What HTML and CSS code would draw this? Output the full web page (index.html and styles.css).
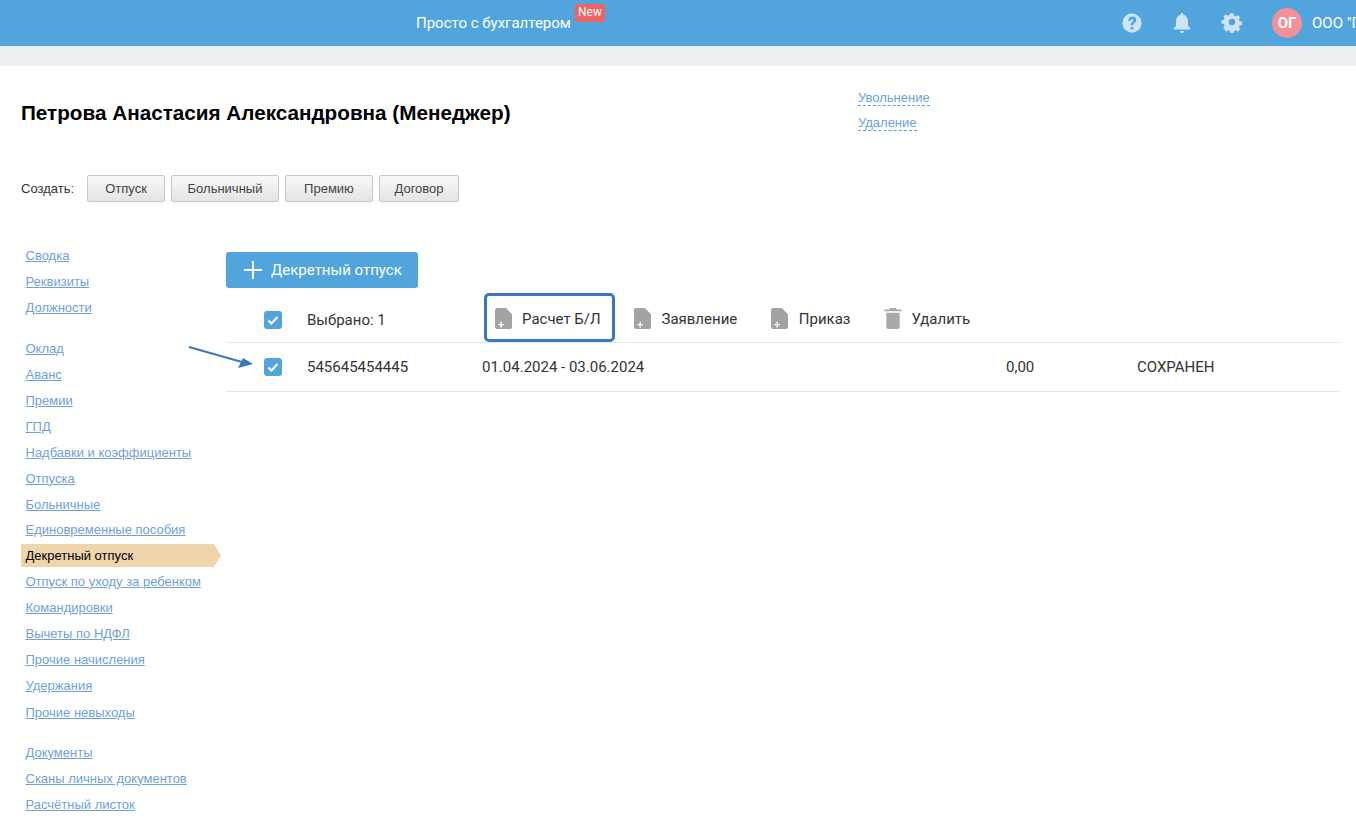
FILE: index.html
```
<!DOCTYPE html>
<html lang="ru">
<head>
<meta charset="utf-8">
<title>Декретный отпуск</title>
<link rel="stylesheet" href="styles.css">
</head>
<body>
<header class="topbar">
  <div class="promo">Просто с бухгалтером<span class="badge">New</span></div>
  <div class="top-icons">
    <svg class="top-icon" viewBox="0 0 24 24"><path fill-rule="evenodd" d="M12 1.500a10.500 10.500 0 1 0 0 21 10.500 10.500 0 0 0 0-21zM10.600 19v-2.700h2.800V19zm5.700-8.600c-.3.700-.9 1.200-1.500 1.700-.7.500-1.300 1-1.300 1.700v.6h-2.800v-.9c0-1.300.7-2 1.500-2.600.7-.5 1.400-.9 1.400-1.600 0-.8-.7-1.300-1.600-1.300-1 0-1.700.6-1.800 1.700H7.900C8 6.600 9.700 5 12.400 5c2.900 0 4.500 1.500 4.300 3.700 0 .6-.2 1.200-.4 1.700z"/></svg>
    <svg class="top-icon" viewBox="0 0 24 24"><path d="M12 1c1 0 1.500.6 1.500 1.500v.6c3.300.8 5 3.600 5 7v3.400c0 1.600 1.200 2.800 2.500 4v1.500H3V18c1.300-1.200 2.500-2.400 2.500-4v-3.900c0-3.400 1.700-6.200 5-7v-.6C10.500 1.600 11 1 12 1zM9.800 20.700h4.400c0 1.300-1 2.300-2.200 2.300s-2.200-1-2.200-2.300z"/></svg>
    <svg class="top-icon gear" viewBox="0 0 24 24"><path fill-rule="evenodd" d="M10 1.500h4l.6 3 2 .9 2.600-1.700 2.800 2.800-1.700 2.600.9 2 3 .6v4l-3 .6-.9 2 1.700 2.600-2.800 2.800-2.600-1.700-2 .9-.6 3h-4l-.6-3-2-.9-2.600 1.700L1.400 19l1.700-2.600-.9-2-3-.6v-4l3-.6.9-2L1.400 5.500l2.800-2.800 2.600 1.700 2-.9zM12 8a4 4 0 1 0 0 8 4 4 0 0 0 0-8z" transform="translate(1.200 1.200) scale(.9)"/></svg>
  </div>
  <div class="avatar">ОГ</div>
  <div class="company">ООО "Горизонт"</div>
</header>
<div class="subbar"></div>

<section class="person">
  <h1 class="person-name">Петрова Анастасия Александровна (Менеджер)</h1>
  <div class="person-links">
    <a class="dash-link">Увольнение</a>
    <a class="dash-link">Удаление</a>
  </div>
</section>

<div class="create-row">
  <span class="create-label">Создать:</span>
  <button class="create-btn btn-a">Отпуск</button>
  <button class="create-btn btn-b">Больничный</button>
  <button class="create-btn btn-c">Премию</button>
  <button class="create-btn btn-d">Договор</button>
</div>

<div class="main">
  <nav class="side">
    <ul class="side-group">
      <li><a>Сводка</a></li>
      <li><a>Реквизиты</a></li>
      <li><a>Должности</a></li>
    </ul>
    <ul class="side-group">
      <li><a>Оклад</a></li>
      <li><a>Аванс</a></li>
      <li><a>Премии</a></li>
      <li><a>ГПД</a></li>
      <li><a>Надбавки и коэффициенты</a></li>
      <li><a>Отпуска</a></li>
      <li><a>Больничные</a></li>
      <li class="side-tight"><a>Единовременные пособия</a></li>
      <li class="active"><span>Декретный отпуск</span></li>
      <li><a>Отпуск по уходу за ребенком</a></li>
      <li><a>Командировки</a></li>
      <li><a>Вычеты по НДФЛ</a></li>
      <li><a>Прочие начисления</a></li>
      <li><a>Удержания</a></li>
      <li class="side-last"><a>Прочие невыходы</a></li>
    </ul>
    <ul class="side-group">
      <li><a>Документы</a></li>
      <li><a>Сканы личных документов</a></li>
      <li><a>Расчётный листок</a></li>
    </ul>
  </nav>

  <section class="content">
    <button class="add-btn">
      <svg class="plus" viewBox="0 0 18 18"><path d="M9 0v18M0 9h18"/></svg>
      Декретный отпуск
    </button>

    <div class="table">
      <div class="toolbar">
        <span class="check"><svg viewBox="0 0 18 18"><path d="M4.500 9.500l3 3 6-6.500"/></svg></span>
        <span class="selected">Выбрано: 1</span>
        <div class="actions">
          <a class="action focus">
            <svg class="doc" viewBox="0 0 18 22"><path d="M2 0h9.500L18 6.500V20a2 2 0 0 1-2 2H2a2 2 0 0 1-2-2V2a2 2 0 0 1 2-2z"/><path class="doc-plus" d="M6.500 14.500v6M3.500 17.500h6"/></svg>
            Расчет Б/Л
          </a>
          <a class="action act-b">
            <svg class="doc" viewBox="0 0 18 22"><path d="M2 0h9.500L18 6.500V20a2 2 0 0 1-2 2H2a2 2 0 0 1-2-2V2a2 2 0 0 1 2-2z"/><path class="doc-plus" d="M6.500 14.500v6M3.500 17.500h6"/></svg>
            Заявление
          </a>
          <a class="action act-c">
            <svg class="doc" viewBox="0 0 18 22"><path d="M2 0h9.500L18 6.500V20a2 2 0 0 1-2 2H2a2 2 0 0 1-2-2V2a2 2 0 0 1 2-2z"/><path class="doc-plus" d="M6.500 14.500v6M3.500 17.500h6"/></svg>
            Приказ
          </a>
          <a class="action act-d">
            <svg class="trash" viewBox="0 0 18 22"><path d="M6 0h6l1 1.500h5V3.500H0V1.500h5zM2 5h14v15a2 2 0 0 1-2 2H4a2 2 0 0 1-2-2z"/></svg>
            Удалить
          </a>
        </div>
      </div>
      <div class="row">
        <span class="check"><svg viewBox="0 0 18 18"><path d="M4.500 9.500l3 3 6-6.500"/></svg></span>
        <span class="cell-num">545645454445</span>
        <span class="cell-date">01.04.2024 - 03.06.2024</span>
        <span class="cell-sum">0,00</span>
        <span class="cell-status">СОХРАНЕН</span>
      </div>
      <svg class="arrow" viewBox="0 0 70 26"><path d="M1 1L54 16"/><path class="arrow-head" d="M65 18L50 22 55 12z"/></svg>
    </div>
  </section>
</div>
</body>
</html>
```
FILE: styles.css
```
* { box-sizing: border-box; }
html, body { margin: 0; height: 100%; overflow: hidden; }
body { background: #fff; font-family: "Liberation Sans", Arial, sans-serif; color: #000; width: 1356px; }
ul { list-style: none; margin: 0; padding: 0; }
button { font: inherit; cursor: pointer; }

.topbar { height: 46px; background: #52a5dc; display: flex; align-items: center; color: #fff; font-family: Roboto, sans-serif; overflow: hidden; }
.promo { margin-left: 416px; font-size: 15px; display: flex; align-items: center; width: 600px; flex: none; height: 100%; }
.badge { align-self: flex-start; margin: 4px 0 0 4px; width: 30px; height: 18px; background: #ec6464; border-radius: 3px; font-size: 12px; font-weight: 400; line-height: 17px; text-align: center; }
.top-icons { margin-left: 105px; display: flex; gap: 28px; width: 122px; flex: none; }
.top-icon { width: 22px; height: 22px; fill: #cde4f6; flex: none; }
.gear { position: relative; top: -1px; }
.avatar { margin-left: 29px; width: 30px; height: 30px; border-radius: 50%; background: #f38f96; font-size: 15px; font-weight: 700; line-height: 30px; text-align: center; flex: none; }
.company { margin-left: 10px; font-size: 15px; white-space: nowrap; flex: none; }

.subbar { height: 20px; background: #ebeff2; }

.person { height: 109px; display: flex; padding: 20px 0 0 21px; }
.person-name { margin: 15px 0 0; width: 837px; flex: none; font-size: 20.700px; line-height: 24px; font-weight: 700; }
.person-links { display: flex; flex-direction: column; align-items: flex-start; gap: 9px; margin-top: 4px; }
.dash-link { font-size: 13px; line-height: 15px; color: #6f9fdc; border-bottom: 1px dashed #52a5dc; height: 16px; }

.create-row { display: flex; align-items: center; height: 27px; padding-left: 21px; }
.create-label { font-size: 13px; color: #333; width: 66px; flex: none; }
.create-btn { height: 27px; padding: 0; margin-right: 6px; font-size: 13px; color: #444; background: linear-gradient(#f8f8f8, #e4e4e4); border: 1px solid #c8c8c8; border-radius: 2px; }
.btn-a { width: 78px; }
.btn-b { width: 108px; }
.btn-c { width: 88px; }
.btn-d { width: 80px; }

.main { display: flex; margin-top: 40px; padding-left: 21px; }
.side { width: 205px; flex: none; }
.side-group { margin-bottom: 15px; }
.side-group li { height: 26px; display: flex; align-items: center; padding-left: 4.500px; font-size: 13px; white-space: nowrap; }
.side-group a { color: #6f9fdc; text-decoration: underline; }
.side-group li.side-tight { margin-top: -1px; }
.side-group li.side-last { margin: 1px 0 -1px; }
.side-group li.active { width: 200px; height: 23px; margin: 2px 0 1px; color: #000; background: #eed5ab; clip-path: polygon(0 0, 193px 0, 200px 50%, 193px 100%, 0 100%); }

.content { flex: 1; padding: 10px 16px 0 0; font-family: Roboto, sans-serif; color: #333; font-size: 15px; }
.add-btn { display: flex; align-items: center; gap: 9px; width: 192px; height: 36px; padding: 0 0 0 18px; background: #52a5dc; color: #fff; border: 0; border-radius: 3px; font-family: Roboto, sans-serif; font-size: 15px; font-weight: 400; }
.plus { width: 18px; height: 18px; stroke: #fff; stroke-width: 2; fill: none; flex: none; }

.table { position: relative; }
.toolbar { display: flex; align-items: center; height: 55px; border-bottom: 1px solid #e6e6e6; padding: 10px 0 0 38px; }
.row { display: flex; align-items: center; height: 49px; border-bottom: 1px solid #e6e6e6; padding-left: 38px; }
.check { width: 18px; height: 18px; border-radius: 3px; background: #52a5dc; flex: none; display: block; }
.check svg { display: block; width: 18px; height: 18px; fill: none; stroke: #fff; stroke-width: 2; }
.selected { margin-left: 25px; width: 177px; flex: none; }
.actions { display: flex; align-items: center; align-self: flex-end; height: 49px; position: relative; }
.action { display: flex; align-items: center; gap: 10.500px; height: 49px; padding-top: 2px; color: #333; white-space: nowrap; }
.focus { width: 131px; gap: 10px; padding: 2px 0 0 8px; border: 3px solid #3a78bd; border-radius: 5px; }
.doc { width: 17px; height: 21px; fill: #a3a3a3; flex: none; }
.doc-plus { fill: none; stroke: #fff; stroke-width: 1.500; }
.trash { width: 18px; height: 21px; fill: #a9a9a9; flex: none; }
.act-b { margin-left: 19px; }
.act-c { margin-left: 34px; }
.act-d { margin-left: 34px; gap: 9px; }
.cell-num { margin-left: 25px; width: 175px; flex: none; }
.cell-date { width: 524px; flex: none; }
.cell-sum { width: 131px; flex: none; }
.cell-status { flex: none; }

.arrow { position: absolute; left: -38px; top: 58px; width: 70px; height: 26px; overflow: visible; }
.arrow path { stroke: #3a78bd; stroke-width: 2; fill: none; }
.arrow .arrow-head { fill: #3a78bd; stroke: none; }
```
